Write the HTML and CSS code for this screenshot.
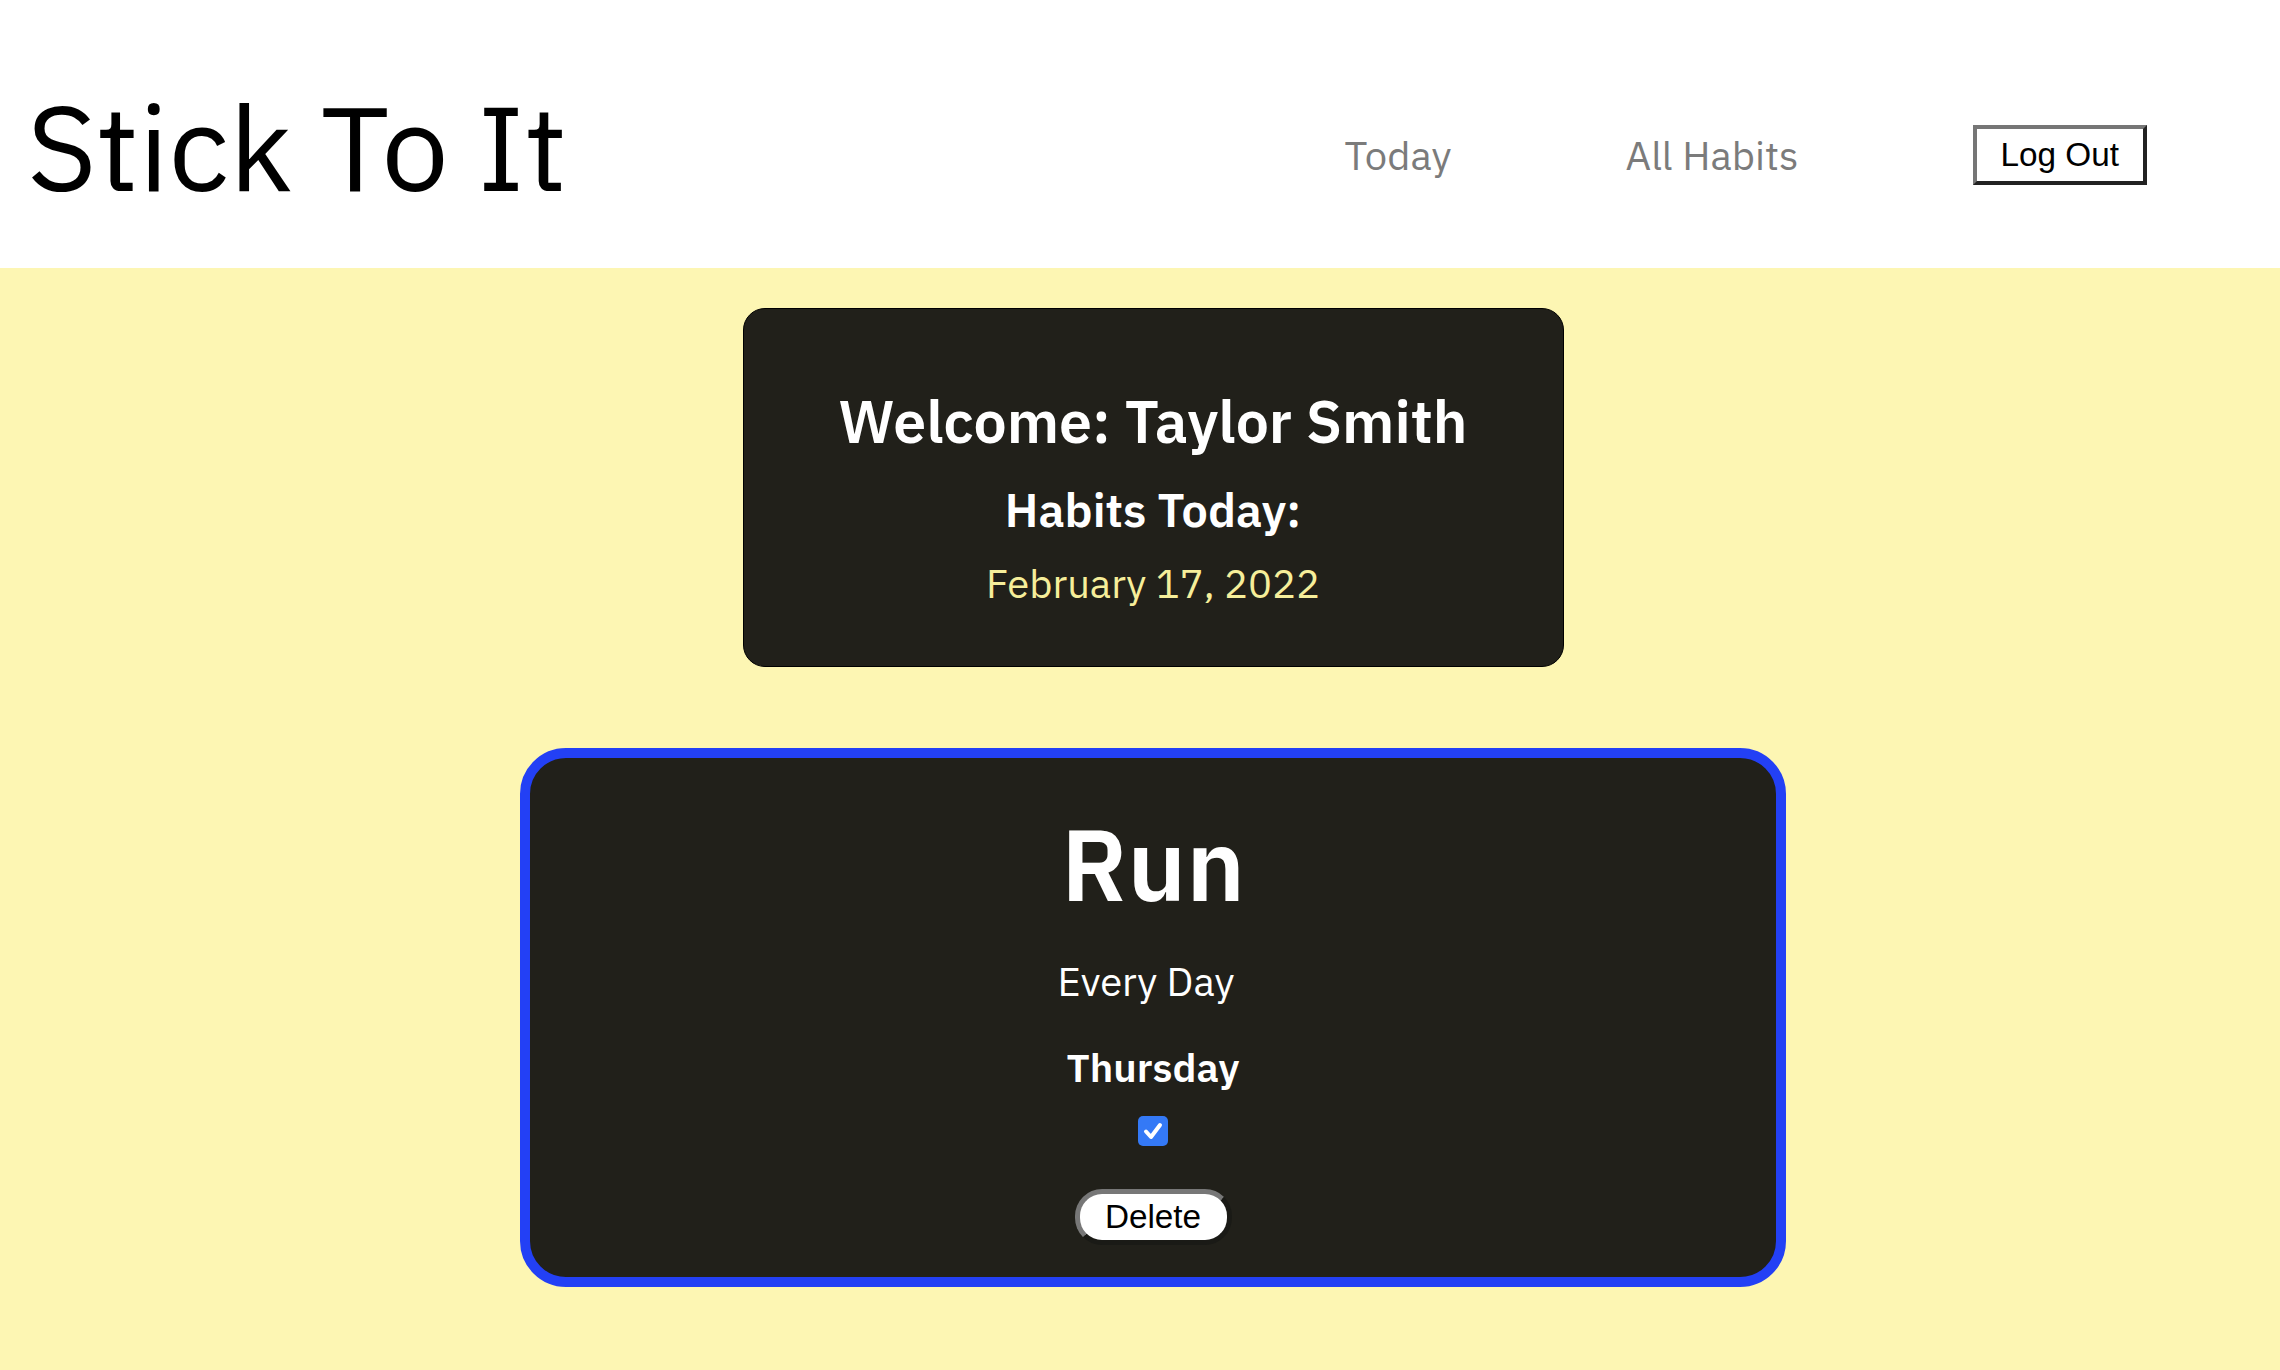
FILE: index.html
```html
<!DOCTYPE html>
<html lang="en">
<head>
<meta charset="utf-8">
<title>Stick To It</title>
<link rel="stylesheet" href="styles.css">
</head>
<body>
<header class="site-header">
  <h1 class="brand">Stick To It</h1>
  <nav class="main-nav">
    <a class="nav-link" href="#">Today</a>
    <a class="nav-link" href="#">All Habits</a>
    <button class="logout-btn" type="button">Log Out</button>
  </nav>
</header>
<main class="page">
  <section class="welcome-card">
    <h2 class="welcome-title">Welcome: Taylor Smith</h2>
    <h3 class="welcome-sub">Habits Today:</h3>
    <p class="welcome-date">February 17, 2022</p>
  </section>
  <section class="habit-card">
    <h2 class="habit-name">Run</h2>
    <p class="habit-freq">Every Day</p>
    <h4 class="habit-day">Thursday</h4>
    <span class="check-wrap">
      <input class="habit-check" type="checkbox" checked aria-label="Done">
      <svg class="check-mark" viewBox="0 0 30 30" width="30" height="30" aria-hidden="true"><path d="M8 15.5 L13 21 L22 9" fill="none" stroke="#fff" stroke-width="4" stroke-linecap="round" stroke-linejoin="round"/></svg>
    </span>
    <button class="delete-btn" type="button">Delete</button>
  </section>
</main>
</body>
</html>
```
FILE: styles.css
```css
* { box-sizing: border-box; }
html, body { margin: 0; padding: 0; }
body {
  font-family: "IBM Plex Sans", Roboto, "Noto Sans", sans-serif;
  background: #fdf6b3;
  min-height: 1370px;
}
.site-header {
  background: #ffffff;
  height: 268px;
  display: flex;
  align-items: center;
  justify-content: space-between;
  padding: 23px 0 0 27px;
}
.brand {
  margin: 0;
  font-size: 120px;
  line-height: 1;
  font-weight: 400;
  color: #000;
}
.main-nav {
  display: flex;
  align-items: center;
  gap: 174px;
  margin-right: 133px;
  margin-top: 18px;
}
.nav-link {
  color: #7b7b7b;
  text-decoration: none;
  font-size: 40px;
  line-height: 1;
  font-weight: 400;
}
.logout-btn {
  font-family: "Liberation Sans", Arial, sans-serif;
  font-size: 33.3px;
  line-height: 38px;
  color: #000;
  background: #fff;
  border: 4px solid;
  border-color: #767676 #222 #222 #767676;
  padding: 7px 24px;
  border-radius: 0;
}
.page {
  display: flex;
  flex-direction: column;
  align-items: center;
  padding: 40px 0 80px 26px;
}
.welcome-card {
  width: 821px;
  height: 359px;
  background: #21201a;
  border: 1.5px solid #000;
  border-radius: 22px;
  display: flex;
  flex-direction: column;
  align-items: center;
  padding-top: 83px;
  color: #fff;
}
.welcome-title {
  margin: 0;
  font-size: 59px;
  line-height: 1;
  font-weight: 600;
}
.welcome-sub {
  margin: 36px 0 0;
  font-size: 46.8px;
  line-height: 1;
  font-weight: 600;
}
.welcome-date {
  margin: 29px 0 0;
  font-size: 40px;
  line-height: 1;
  color: #f6ee9a;
}
.habit-card {
  width: 1266px;
  height: 539px;
  margin-top: 81px;
  background: #21201a;
  border: 10px solid #2340f5;
  border-radius: 46px;
  display: flex;
  flex-direction: column;
  align-items: center;
  padding-top: 56.4px;
  color: #fff;
}
.habit-name {
  margin: 0;
  font-size: 100px;
  line-height: 1;
  font-weight: 600;
}
.habit-freq {
  margin: 46.8px 14px 0 0;
  font-size: 40px;
  line-height: 1;
  font-weight: 400;
}
.habit-day {
  margin: 45.5px 0 0;
  font-size: 40px;
  line-height: 1;
  font-weight: 600;
}
.check-wrap {
  position: relative;
  width: 30px;
  height: 30px;
  margin-top: 29.3px;
  display: block;
}
.habit-check {
  appearance: none;
  -webkit-appearance: none;
  margin: 0;
  width: 30px;
  height: 30px;
  border-radius: 5px;
  background: #3479f6;
  display: block;
}
.check-mark {
  position: absolute;
  left: 0;
  top: 0;
  pointer-events: none;
}
.delete-btn {
  margin-top: 43px;
  width: 157px;
  height: 56px;
  font-family: "Liberation Sans", Arial, sans-serif;
  font-size: 33.3px;
  line-height: 1;
  color: #000;
  background: #fff;
  border: 5px solid;
  border-color: #777 #1a1a16 #1a1a16 #777;
  border-radius: 27px;
  padding: 0;
}
```
